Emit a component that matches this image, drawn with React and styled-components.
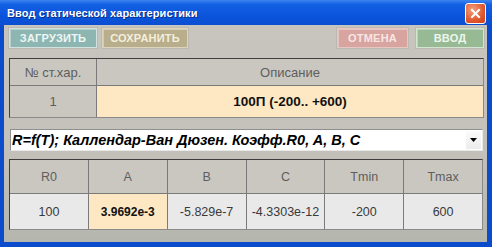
import React from 'react'
import styled, { createGlobalStyle } from 'styled-components'

const GlobalStyle = createGlobalStyle`
  html, body {
    margin: 0;
    padding: 0;
    background: #ffffff;
  }
  body {
    font-family: "Liberation Sans", Arial, sans-serif;
  }
`

const Window = styled.div`
  width: 492px;
  height: 247px;
  display: flex;
  flex-direction: column;
  background: #0b4ccc;
`

const TitleBar = styled.div`
  height: 25px;
  flex: none;
  display: flex;
  align-items: center;
  justify-content: space-between;
  padding: 0 6px 0 7px;
  background: linear-gradient(#3d84f0 0%, #1460e4 18%, #0a55dc 60%, #0a4ed2 100%);
`

const Title = styled.span`
  color: #ffffff;
  font-weight: bold;
  font-size: 11px;
  letter-spacing: 0.1px;
  text-shadow: 1px 1px 0 #0a2f8a;
`

const CloseButton = styled.div`
  width: 19px;
  height: 19px;
  margin-top: 1px;
  border: 1px solid #ffffff;
  border-radius: 3px;
  background: radial-gradient(circle at 35% 30%, #f4a07c, #e0582e 60%, #c9401c);
  display: flex;
  align-items: center;
  justify-content: center;
`

const Frame = styled.div`
  flex: 1;
  display: flex;
  padding: 0 5px 5px 4px;
`

const Body = styled.div`
  flex: 1;
  display: flex;
  flex-direction: column;
  padding: 3px 3px 0 5px;
  background: linear-gradient(#c8c5be 0%, #c4c1ba 55%, #b5b6ae 100%);
`

const Toolbar = styled.div`
  display: flex;
  align-items: center;
  height: 20px;
`

const Spacer = styled.div`
  flex: 1;
`

const ToolButton = styled.div`
  width: ${p => p.$w}px;
  height: 20px;
  box-sizing: border-box;
  margin-left: ${p => p.$ml || 0}px;
  display: flex;
  align-items: center;
  justify-content: center;
  background: ${p => p.$bg};
  border: 1px solid ${p => p.$edge};
  box-shadow: inset 1px 1px 0 rgba(255, 255, 255, 0.35), 0 0 0 1px rgba(0, 0, 0, 0.06);
  color: ${p => p.$fg};
  font-weight: bold;
  font-size: 11px;
  letter-spacing: 0.2px;
`

const Table = styled.div`
  display: grid;
  grid-template-columns: ${p => p.$cols};
  grid-template-rows: ${p => p.$rows};
  margin-top: ${p => p.$mt}px;
  margin-right: ${p => p.$mr || 0}px;
  border: 1px solid #3e3e3e;
  border-right-color: #8a8a8a;
  border-bottom-color: #8a8a8a;
  background: #7a7a7a;
  gap: 1px;
`

const HeadCell = styled.div`
  display: flex;
  align-items: center;
  justify-content: center;
  background: #cac7c0;
  color: #5e5e5e;
  font-size: ${p => p.$fs || 12}px;
`

const DataCell = styled.div`
  display: flex;
  align-items: center;
  justify-content: center;
  background: ${p => (p.$hl ? '#fde8c3' : p.$gray ? '#cac7c0' : '#e9e9ea')};
  color: ${p => (p.$bold ? '#111111' : p.$gray ? '#5e5e5e' : '#3a3a3a')};
  font-weight: ${p => (p.$bold ? 'bold' : 'normal')};
  font-size: ${p => p.$fs || 12}px;
`

const Select = styled.div`
  margin: 11px 1px 0 1px;
  height: 22px;
  box-sizing: border-box;
  display: flex;
  align-items: center;
  background: #ffffff;
  border-top: 1px solid #8f8f8f;
  border-left: 1px solid #8f8f8f;
  border-bottom: 1px solid #e8e8e8;
  border-right: 1px solid #e8e8e8;
`

const SelectText = styled.div`
  flex: 1;
  padding-left: 1px;
  font-size: 14.5px;
  font-weight: bold;
  font-style: italic;
  color: #000000;
  white-space: nowrap;
  overflow: hidden;
`

const SelectArrow = styled.div`
  width: 15px;
  height: 18px;
  margin-right: 1px;
  display: flex;
  align-items: center;
  justify-content: center;
  background: linear-gradient(#fbfbfb, #ececec);
`

const header2 = ['R0', 'A', 'B', 'C', 'Tmin', 'Tmax']
const values2 = [
  { v: '100' },
  { v: '3.9692e-3', hl: true },
  { v: '-5.829e-7' },
  { v: '-4.3303e-12' },
  { v: '-200' },
  { v: '600' },
]

export default function App() {
  return (
    <>
      <GlobalStyle />
      <Window>
        <TitleBar>
          <Title>Ввод статической характеристики</Title>
          <CloseButton>
            <svg width="11" height="11" viewBox="0 0 11 11">
              <path d="M2 2 L9 9 M9 2 L2 9" stroke="#ffffff" strokeWidth="2" strokeLinecap="square" />
            </svg>
          </CloseButton>
        </TitleBar>
        <Frame>
          <Body>
            <Toolbar>
              <ToolButton $w={88} $bg="#8db6b3" $edge="#d2e2de" $fg="#eef6f3">ЗАГРУЗИТЬ</ToolButton>
              <ToolButton $w={86} $ml={5} $bg="#b9ae8c" $edge="#ddd5bd" $fg="#f4eedc">СОХРАНИТЬ</ToolButton>
              <Spacer />
              <ToolButton $w={71} $bg="#d8a4a0" $edge="#e8c6c2" $fg="#f7e6e3">ОТМЕНА</ToolButton>
              <ToolButton $w={68} $ml={8} $bg="#97ba95" $edge="#d3e4d0" $fg="#eef6ec">ВВОД</ToolButton>
            </Toolbar>

            <Table $cols="86px 1fr" $rows="26px 31px" $mt={10}>
              <HeadCell $fs={13}>№ ст.хар.</HeadCell>
              <HeadCell $fs={13}>Описание</HeadCell>
              <DataCell $gray $fs={13}>1</DataCell>
              <DataCell $hl $bold $fs={13.5}>100П (-200.. +600)</DataCell>
            </Table>

            <Select>
              <SelectText>R=f(T); Каллендар-Ван Дюзен. Коэфф.R0, A, B, C</SelectText>
              <SelectArrow>
                <svg width="7" height="4" viewBox="0 0 7 4">
                  <path d="M0 0 H7 L3.5 4 Z" fill="#000000" />
                </svg>
              </SelectArrow>
            </Select>

            <Table $cols="repeat(6, 1fr)" $rows="33px 35px" $mt={8} $mr={1}>
              {header2.map(h => (
                <HeadCell key={h} $fs={12.5}>{h}</HeadCell>
              ))}
              {values2.map((c, i) => (
                <DataCell key={i} $hl={c.hl} $bold={c.hl} $fs={c.hl ? 12 : 12.5}>{c.v}</DataCell>
              ))}
            </Table>
          </Body>
        </Frame>
      </Window>
    </>
  )
}
